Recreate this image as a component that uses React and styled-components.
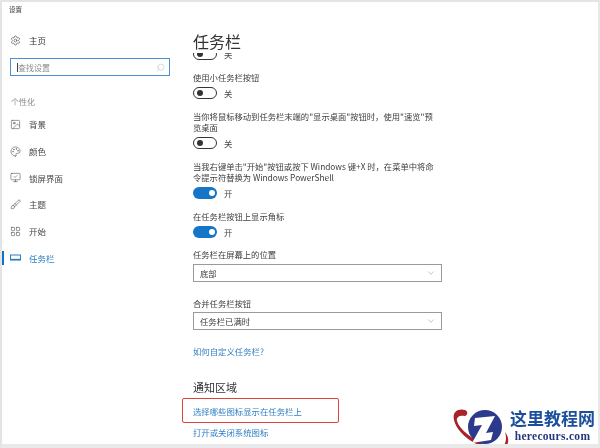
import React from "react";
import styled, { createGlobalStyle } from "styled-components";
import { Settings, Search, Image, Palette, MonitorCheck, Brush, LayoutGrid, ChevronDown } from "lucide-react";

const GlobalStyle = createGlobalStyle`
  html, body {
    margin: 0;
    padding: 0;
    background: #fff;
  }
`;

const FONT = `"Noto Sans CJK SC", "Noto Sans", sans-serif`;

function TaskbarIcon() {
  return (
    <svg width="11" height="11" viewBox="0 0 11 11" fill="none" stroke="currentColor">
      <rect x="0.5" y="3" width="10" height="5" strokeWidth="1" />
      <path d="M0.5 7.5 H10.5" strokeWidth="1.4" />
    </svg>
  );
}

const navItems = [
  { label: "背景", Icon: Image },
  { label: "颜色", Icon: Palette },
  { label: "锁屏界面", Icon: MonitorCheck },
  { label: "主题", Icon: Brush },
  { label: "开始", Icon: LayoutGrid },
  { label: "任务栏", Icon: TaskbarIcon, active: true },
];

function Toggle({ on }) {
  return (
    <ToggleRow>
      <Track $on={on}>
        <Knob $on={on} />
      </Track>
      <ToggleLabel>{on ? "开" : "关"}</ToggleLabel>
    </ToggleRow>
  );
}

function Dropdown({ value }) {
  return (
    <Select>
      <span>{value}</span>
      <ChevronDown size={10} strokeWidth={1.2} color="#8a8a8a" />
    </Select>
  );
}

function Logo() {
  return (
    <svg width="64" height="42" viewBox="0 0 64 42">
      <path d="M15 4 C8 2 2 6 4 14 C6 24 18 36 36 42 L44 42 C30 38 10 26 7 15 C6 11 10 9 15 10 C18 9 18 5 15 4 Z" fill="#a8222a" />
      <circle cx="35" cy="21" r="17" fill="#2b3a8c" />
      <path d="M25 12 L45 10 L36 27 L43 26 L41 34 L22 37 L32 19 L24 20 Z" fill="#fff" />
      <path d="M55 26 C59 31 60 38 54 42 L52 42 C56 38 57 32 55 26 Z" fill="#a8222a" />
    </svg>
  );
}

function App() {
  return (
    <>
      <GlobalStyle />
      <Window>
        <Sidebar>
          <WindowTitle>设置</WindowTitle>
          <HomeRow>
            <Settings size={11} strokeWidth={1.3} color="#444" />
            <span>主页</span>
          </HomeRow>
          <SearchBox>
            <Caret />
            <Placeholder>查找设置</Placeholder>
            <Search size={9} strokeWidth={1.3} color="#b5b5b5" style={{ transform: "scaleX(-1)" }} />
          </SearchBox>
          <SectionLabel>个性化</SectionLabel>
          <Nav>
            {navItems.map(({ label, Icon, active }) => (
              <NavItem key={label} $active={active}>
                <Icon size={11} strokeWidth={1.2} />
                <span>{label}</span>
              </NavItem>
            ))}
          </Nav>
        </Sidebar>
        <Main>
          <PageTitle>任务栏</PageTitle>
          <ClippedToggle>
            <Toggle />
          </ClippedToggle>
          <Label $gap={12}>使用小任务栏按钮</Label>
          <Toggle />
          <Label>当你将鼠标移动到任务栏末端的"显示桌面"按钮时，使用"速览"预览桌面</Label>
          <Toggle />
          <Label>当我右键单击"开始"按钮或按下 Windows 键+X 时，在菜单中将命令提示符替换为 Windows PowerShell</Label>
          <Toggle on />
          <Label>在任务栏按钮上显示角标</Label>
          <Toggle on />
          <Label>任务栏在屏幕上的位置</Label>
          <Dropdown value="底部" />
          <Label $gap={16}>合并任务栏按钮</Label>
          <Dropdown value="任务栏已满时" />
          <HelpLink>如何自定义任务栏?</HelpLink>
          <SectionTitle>通知区域</SectionTitle>
          <Highlight>
            <TextLink>选择哪些图标显示在任务栏上</TextLink>
          </Highlight>
          <LastLink>打开或关闭系统图标</LastLink>
        </Main>
        <Watermark>
          <Logo />
          <Brand>
            <BrandName>这里教程网</BrandName>
            <BrandUrl>herecours.com</BrandUrl>
          </Brand>
        </Watermark>
      </Window>
    </>
  );
}

const Window = styled.div`
  position: relative;
  width: 600px;
  height: 448px;
  box-sizing: border-box;
  display: flex;
  overflow: hidden;
  background: #fff;
  border-top: 2px solid #e4e4e4;
  border-left: 2px solid #e4e4e4;
  border-right: 2px solid #e8e8e8;
  border-bottom: 4px solid #e9e9e9;
  font-family: ${FONT};
  filter: blur(0.45px);
`;

const Sidebar = styled.div`
  width: 178px;
  flex-shrink: 0;
  display: flex;
  flex-direction: column;
`;

const WindowTitle = styled.div`
  margin: 2px 0 0 7px;
  height: 10px;
  font-size: 6.5px;
  line-height: 10px;
  color: #333;
`;

const HomeRow = styled.div`
  display: flex;
  align-items: center;
  gap: 8px;
  margin: 20px 0 0 8px;
  height: 12px;
  font-size: 8.5px;
  color: #333;
`;

const SearchBox = styled.div`
  display: flex;
  align-items: center;
  box-sizing: border-box;
  width: 160px;
  height: 18px;
  margin: 12px 0 0 8px;
  padding: 0 4px 0 6px;
  border: 1.5px solid #4a90d0;
`;

const Caret = styled.div`
  width: 1px;
  height: 9px;
  background: #444;
`;

const Placeholder = styled.span`
  flex: 1;
  font-size: 8px;
  color: #8c8c8c;
`;

const SectionLabel = styled.div`
  margin: 20px 0 0 9px;
  height: 12px;
  font-size: 8px;
  line-height: 12px;
  color: #8a8a8a;
`;

const Nav = styled.div`
  display: flex;
  flex-direction: column;
  margin-top: 3px;
`;

const NavItem = styled.div`
  display: flex;
  align-items: center;
  gap: 8px;
  height: 26.7px;
  padding-left: 8px;
  font-size: 8.5px;
  color: ${(p) => (p.$active ? "#2f7fc4" : "#444")};
  background: ${(p) => (p.$active ? "linear-gradient(#1273c4, #1273c4) left center / 2px 14px no-repeat" : "none")};
`;

const Main = styled.div`
  flex: 1;
  display: flex;
  flex-direction: column;
  padding-left: 13px;
  min-width: 0;
`;

const PageTitle = styled.div`
  margin-top: 27px;
  height: 24px;
  font-size: 16px;
  line-height: 24px;
  color: #333;
`;

const ClippedToggle = styled.div`
  height: 7px;
  overflow: hidden;
  & > div {
    margin-top: -6px;
  }
`;

const Label = styled.div`
  width: 241px;
  margin-top: ${(p) => p.$gap || 11}px;
  font-size: 8.3px;
  line-height: 11.5px;
  color: #3c3c3c;
`;

const ToggleRow = styled.div`
  display: flex;
  align-items: center;
  gap: 7px;
  margin-top: 3px;
  height: 13px;
`;

const Track = styled.div`
  display: flex;
  align-items: center;
  justify-content: ${(p) => (p.$on ? "flex-end" : "flex-start")};
  box-sizing: border-box;
  width: 24px;
  height: 12px;
  padding: 0 2.5px;
  border-radius: 6px;
  background: ${(p) => (p.$on ? "#1576c8" : "#fff")};
  border: ${(p) => (p.$on ? "none" : "1.2px solid #333")};
`;

const Knob = styled.div`
  width: 6px;
  height: 6px;
  border-radius: 50%;
  background: ${(p) => (p.$on ? "#fff" : "#333")};
`;

const ToggleLabel = styled.span`
  font-size: 8.4px;
  color: #444;
`;

const Select = styled.div`
  display: flex;
  align-items: center;
  justify-content: space-between;
  box-sizing: border-box;
  width: 249px;
  height: 18px;
  margin-top: 3px;
  padding: 0 5px 0 6px;
  border: 1px solid #9a9a9a;
  font-size: 8.4px;
  color: #3c3c3c;
`;

const TextLink = styled.div`
  font-size: 8.4px;
  line-height: 12px;
  color: #2f7fc4;
`;

const HelpLink = styled(TextLink)`
  margin-top: 15px;
`;

const LastLink = styled(TextLink)`
  margin-top: 3px;
`;

const SectionTitle = styled.div`
  margin-top: 22px;
  height: 16px;
  font-size: 11px;
  line-height: 16px;
  color: #333;
`;

const Highlight = styled.div`
  display: flex;
  align-items: center;
  box-sizing: border-box;
  width: 157px;
  height: 25px;
  margin: 3px 0 0 -11px;
  padding-left: 10px;
  border: 1.5px solid #e2403a;
  border-radius: 2px;
`;

const Watermark = styled.div`
  position: absolute;
  right: -2px;
  bottom: -4px;
  display: flex;
  align-items: flex-end;
  padding-right: 5px;
  background: #fff;
`;

const Brand = styled.div`
  display: flex;
  flex-direction: column;
  align-items: center;
  margin-left: -4px;
  padding-bottom: 6px;
`;

const BrandName = styled.div`
  font-family: "Noto Sans CJK SC", sans-serif;
  font-weight: 700;
  font-size: 17px;
  line-height: 21px;
  color: #1b4f9c;
`;

const BrandUrl = styled.div`
  margin-top: 2px;
  font-family: "Liberation Serif", serif;
  font-weight: 700;
  font-size: 11.5px;
  line-height: 12px;
  letter-spacing: 0.3px;
  color: #27357f;
`;

export default App;
